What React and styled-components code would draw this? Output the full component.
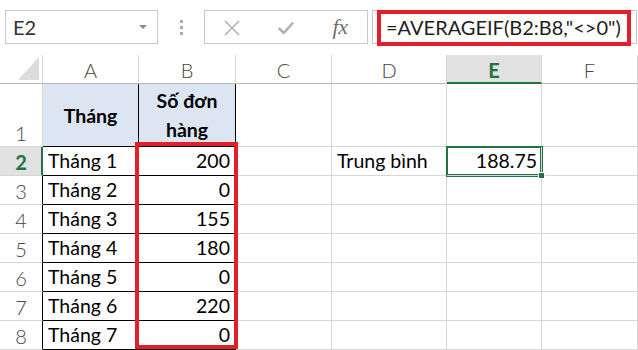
import React from "react";
import styled, { createGlobalStyle, css } from "styled-components";

const Global = createGlobalStyle`
  html, body { margin: 0; padding: 0; background: #fff; }
  body { font-family: Lato, "Liberation Sans", sans-serif; overflow: hidden; }
`;

const Page = styled.div`
  width: 638px;
  height: 350px;
  overflow: hidden;
  background: #fff;
`;

const Toolbar = styled.div`
  display: flex;
  align-items: flex-start;
  height: 55px;
  box-sizing: border-box;
  padding: 10px 0 0 5px;
`;

const NameBox = styled.div`
  width: 153px;
  height: 34px;
  box-sizing: border-box;
  border: 1px solid #c9c9c9;
  display: flex;
  align-items: center;
  justify-content: space-between;
  padding: 0 10px 0 7px;
  font-size: 20px;
  color: #333;
`;

const DropArrow = styled.span`
  width: 0;
  height: 0;
  border-left: 4px solid transparent;
  border-right: 4px solid transparent;
  border-top: 4px solid #8c8c8c;
`;

const Grip = styled.div`
  width: 46px;
  height: 34px;
  display: flex;
  flex-direction: column;
  align-items: center;
  justify-content: center;
  gap: 3px;
`;

const Dot = styled.span`
  width: 3px;
  height: 3px;
  background: #ababab;
`;

const ButtonsBox = styled.div`
  width: 164px;
  height: 34px;
  box-sizing: border-box;
  border: 1px solid #c9c9c9;
  display: grid;
  grid-template-columns: 18px 18px 18px;
  column-gap: 36px;
  align-items: center;
  padding-left: 18px;
  margin-right: 4px;
`;

const IconSlot = styled.span`
  display: flex;
  align-items: center;
  justify-content: center;
  height: 34px;
`;

const Fx = styled.span`
  font-family: "Liberation Serif", "DejaVu Serif", serif;
  font-style: italic;
  font-size: 22px;
  color: #6f6f6f;
  letter-spacing: -0.5px;
  margin-top: -2px;
`;

const FormulaBox = styled.div`
  position: relative;
  width: 265px;
  height: 34px;
  box-sizing: border-box;
  border: 1px solid #c9c9c9;
  display: flex;
  align-items: center;
  padding-left: 13px;
  font-size: 20px;
  color: #1e1e1e;
  white-space: nowrap;
`;

const RedFrame = styled.div`
  position: absolute;
  left: 4px;
  top: -1px;
  width: 254px;
  height: 36px;
  box-sizing: border-box;
  border: 4px solid #e1202a;
  pointer-events: none;
`;

const Sheet = styled.div`
  position: relative;
  display: grid;
  grid-template-columns: 43px 96px 97px 96px 115px 95px 1fr;
  grid-template-rows: 29px 63px repeat(7, 29px);
`;

const GRID = "#d6d6d6";
const INK = "#000";
const GREEN = "#217346";

const Corner = styled.div`
  box-sizing: border-box;
  border-right: 1px solid ${GRID};
  border-bottom: 1px solid #b8b8b8;
  display: flex;
  align-items: flex-end;
  justify-content: flex-end;
  padding: 0 3px 3px 0;
`;

const Triangle = styled.span`
  width: 0;
  height: 0;
  border-left: 21px solid transparent;
  border-bottom: 23px solid #dcdcdc;
`;

const ColHead = styled.div`
  box-sizing: border-box;
  border-right: 1px solid ${GRID};
  border-bottom: 1px solid #b8b8b8;
  display: flex;
  align-items: center;
  justify-content: center;
  font-size: 20px;
  font-weight: 300;
  color: #444;
  padding-top: 2px;
  ${(p) =>
    p.$active &&
    css`
      background: #e1e1e1;
      color: ${GREEN};
      font-weight: 700;
      border-bottom: 2px solid ${GREEN};
      padding-top: 3px;
    `}
`;

const RowHead = styled.div`
  box-sizing: border-box;
  border-right: 1px solid ${(p) => p.$edge || GRID};
  border-bottom: 1px solid ${GRID};
  display: flex;
  align-items: ${(p) => (p.$bottom ? "flex-end" : "center")};
  justify-content: center;
  font-size: 20px;
  font-weight: 300;
  color: #444;
  line-height: 22px;
  padding-bottom: ${(p) => (p.$bottom ? "2px" : "0")};
  padding-top: ${(p) => (p.$bottom ? "0" : "2px")};
  ${(p) =>
    p.$active &&
    css`
      background: #e1e1e1;
      color: ${GREEN};
      font-weight: 700;
      border-right: 2px solid ${GREEN};
      padding-left: 1px;
    `}
`;

const Cell = styled.div`
  position: relative;
  box-sizing: border-box;
  border-right: 1px solid ${(p) => (p.$r ? INK : GRID)};
  border-bottom: 1px solid ${(p) => (p.$b ? INK : GRID)};
  background: ${(p) => p.$fill || "transparent"};
  display: flex;
  align-items: flex-end;
  justify-content: ${(p) => (p.$align === "right" ? "flex-end" : p.$align === "center" ? "center" : "flex-start")};
  padding: 0 5px 3px 5px;
  font-size: 19.5px;
  line-height: 22px;
  color: #000;
  white-space: nowrap;
  ${(p) =>
    p.$head &&
    css`
      align-items: center;
      padding: 0 4px;
      font-weight: 700;
      text-align: center;
      white-space: normal;
      line-height: 29px;
    `}
  ${(p) =>
    p.$selected &&
    css`
      z-index: 2;
      box-shadow: 0 0 0 1px ${GREEN}, inset 0 0 0 1px ${GREEN};
      padding-right: 4px;
    `}
`;

const FillHandle = styled.span`
  position: absolute;
  right: -4px;
  bottom: -4px;
  width: 5px;
  height: 5px;
  background: ${GREEN};
  border: 1px solid #fff;
`;

const ColumnHighlight = styled.div`
  position: absolute;
  left: 135px;
  top: 87px;
  width: 103px;
  height: 207px;
  box-sizing: border-box;
  border: 4px solid #e1202a;
  pointer-events: none;
  z-index: 3;
`;

const XIcon = () => (
  <svg width="18" height="16" viewBox="0 0 18 16">
    <path d="M2 1 L16 15 M16 1 L2 15" stroke="#b3b3b3" strokeWidth="1.6" fill="none" />
  </svg>
);

const CheckIcon = () => (
  <svg width="20" height="16" viewBox="0 0 20 16">
    <path d="M2 8 L7.5 13.5 L18 2" stroke="#b3b3b3" strokeWidth="2.8" fill="none" strokeLinejoin="miter" />
  </svg>
);

const rows = [
  ["Tháng 1", "200"],
  ["Tháng 2", "0"],
  ["Tháng 3", "155"],
  ["Tháng 4", "180"],
  ["Tháng 5", "0"],
  ["Tháng 6", "220"],
  ["Tháng 7", "0"],
];

export default function App() {
  return (
    <Page>
      <Global />
      <Toolbar>
        <NameBox>
          <span>E2</span>
          <DropArrow />
        </NameBox>
        <Grip>
          <Dot />
          <Dot />
          <Dot />
        </Grip>
        <ButtonsBox>
          <IconSlot><XIcon /></IconSlot>
          <IconSlot><CheckIcon /></IconSlot>
          <IconSlot><Fx>fx</Fx></IconSlot>
        </ButtonsBox>
        <FormulaBox>
          =AVERAGEIF(B2:B8,"&lt;&gt;0")
          <RedFrame />
        </FormulaBox>
      </Toolbar>
      <Sheet>
        <Corner><Triangle /></Corner>
        <ColHead>A</ColHead>
        <ColHead>B</ColHead>
        <ColHead>C</ColHead>
        <ColHead>D</ColHead>
        <ColHead $active>E</ColHead>
        <ColHead>F</ColHead>

        <RowHead $bottom>1</RowHead>
        <Cell $head $fill="#dce6f2" $align="center" $r $b>Tháng</Cell>
        <Cell $head $fill="#dce6f2" $align="center" $r $b>Số đơn hàng</Cell>
        <Cell />
        <Cell />
        <Cell />
        <Cell />

        {rows.map(([m, v], i) => (
          <React.Fragment key={m}>
            <RowHead $active={i === 0} $edge={INK}>{i + 2}</RowHead>
            <Cell $r $b>{m}</Cell>
            <Cell $r $b $align="right">{v}</Cell>
            <Cell />
            <Cell>{i === 0 ? "Trung bình" : ""}</Cell>
            {i === 0 ? (
              <Cell $align="right" $selected>
                188.75
                <FillHandle />
              </Cell>
            ) : (
              <Cell />
            )}
            <Cell />
          </React.Fragment>
        ))}
        <ColumnHighlight />
      </Sheet>
    </Page>
  );
}
